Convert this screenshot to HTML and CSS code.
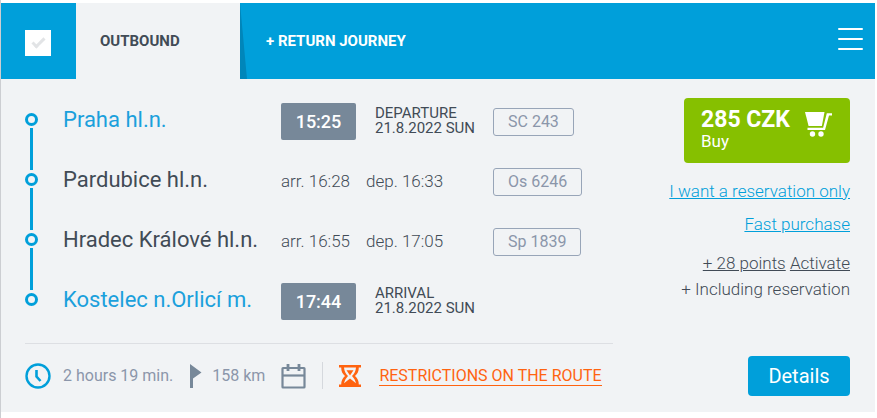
FILE: index.html
```
<!DOCTYPE html>
<html lang="en">
<head>
    <meta charset="UTF-8">
    <meta name="viewport" content="width=device-width, initial-scale=1.0">
    <title>Praha hl.n. - Kostelec n.Orlicí m.</title>
    <link rel="stylesheet" href="styles.css">
</head>
<body>
    <div class="connection">
        <header class="connection-header">
            <div class="select">
                <input type="checkbox" aria-label="Select connection">
            </div>
            <nav class="tabs">
                <a href="#" class="tab active">OUTBOUND</a>
                <a href="#" class="tab">+ RETURN JOURNEY</a>
            </nav>
            <button class="menu" aria-label="Menu">
                <span></span>
                <span></span>
                <span></span>
            </button>
        </header>

        <div class="connection-body">
            <main class="route">
                <ol class="stops">
                    <li class="stop">
                        <span class="marker"></span>
                        <span class="station end">Praha hl.n.</span>
                        <div class="times">
                            <span class="time-badge">15:25</span>
                            <div class="date">
                                <div>DEPARTURE</div>
                                <div>21.8.2022 SUN</div>
                            </div>
                        </div>
                        <span class="train">SC 243</span>
                    </li>
                    <li class="stop">
                        <span class="marker"></span>
                        <span class="station">Pardubice hl.n.</span>
                        <div class="times">
                            <span class="time">arr. 16:28</span>
                            <span class="time">dep. 16:33</span>
                        </div>
                        <span class="train">Os 6246</span>
                    </li>
                    <li class="stop">
                        <span class="marker"></span>
                        <span class="station">Hradec Králové hl.n.</span>
                        <div class="times">
                            <span class="time">arr. 16:55</span>
                            <span class="time">dep. 17:05</span>
                        </div>
                        <span class="train">Sp 1839</span>
                    </li>
                    <li class="stop">
                        <span class="marker"></span>
                        <span class="station end">Kostelec n.Orlicí m.</span>
                        <div class="times">
                            <span class="time-badge">17:44</span>
                            <div class="date">
                                <div>ARRIVAL</div>
                                <div>21.8.2022 SUN</div>
                            </div>
                        </div>
                    </li>
                </ol>

                <div class="summary">
                    <svg class="icon-clock" width="26" height="26" viewBox="0 0 26 26" fill="none" stroke="#009fda" stroke-width="2.4">
                        <circle cx="13" cy="13" r="11.5"/>
                        <path d="M11.5 7v6.5l4 4.5" stroke-width="2.6"/>
                    </svg>
                    <span class="duration">2 hours 19 min.</span>
                    <svg class="icon-flag" width="13" height="24" viewBox="0 0 13 24" fill="#778899">
                        <path d="M1 0l11.500 8.500L4 14.500V24H1z"/>
                    </svg>
                    <span class="distance">158 km</span>
                    <svg class="icon-calendar" width="25" height="26" viewBox="0 0 25 26" fill="none" stroke="#778899" stroke-width="2.2">
                        <rect x="1.500" y="5" width="22" height="19.500" rx="0.500"/>
                        <path d="M1 12.500h23"/>
                        <path d="M7 1v7M18 1v7" stroke-width="2.800"/>
                    </svg>
                    <span class="separator"></span>
                    <svg class="icon-hourglass" width="22" height="22" viewBox="0 0 22 22">
                        <path d="M0 0h22v2.400h-2.200c0 4-1.300 6.200-3.800 8.600 2.500 2.400 3.800 4.600 3.800 8.600H22V22H0v-2.400h2.200c0-4 1.300-6.200 3.800-8.600C3.500 8.600 2.200 6.400 2.200 2.400H0z" fill="#ff6310"/>
                        <path d="M5 2.400h12c-.3 3.600-1.600 6-4 8.600 2 2.200 3.300 4.400 4 7.200L11 13.500l-6 4.700c.7-2.800 2-5 4-7.200-2.400-2.600-3.700-5-4-8.600z" fill="#f1f3f5"/>
                        <path d="M7.500 5.200h7L11 10.500z" fill="#ff6310"/>
                    </svg>
                    <a href="#" class="restrictions">RESTRICTIONS ON THE ROUTE</a>
                </div>
            </main>

            <aside class="offer">
                <button class="buy">
                    <span class="buy-text">
                        <strong>285 CZK</strong>
                        Buy
                    </span>
                    <svg width="27" height="25" viewBox="0 0 27 25" fill="#fff">
                        <path d="M0 0h19.500l-2.600 14H3.600z"/>
                        <path d="M27 1.200v2.400h-3L20 18H2.500v-2.200h15.600L21.800 1.200z"/>
                        <circle cx="7.500" cy="22" r="2.700"/>
                        <circle cx="16" cy="22" r="2.700"/>
                    </svg>
                </button>
                <a href="#" class="link">I want a reservation only</a>
                <a href="#" class="link">Fast purchase</a>
                <p class="notes">
                    <a href="#">+ 28 points</a> <a href="#">Activate</a><br>
                    + Including reservation
                </p>
                <button class="details">Details</button>
            </aside>
        </div>
    </div>
</body>
</html>
```
FILE: styles.css
```
* {
    box-sizing: border-box;
}
body {
    font-family: Roboto, sans-serif;
    margin: 0;
    min-height: 100vh;
    background-color: #fff;
    color: #414b56;
    border-left: 1px solid #ccced2;
    padding: 3px 2px 5px 0;
}
button {
    font-family: inherit;
    border: none;
    cursor: pointer;
}
.connection {
    background-color: #f1f3f5;
}
.connection-header {
    background-color: #009fda;
    display: flex;
    height: 76px;
}
.select {
    width: 75px;
    display: flex;
    align-items: center;
    padding-left: 24px;
}
.select input {
    appearance: none;
    width: 26px;
    height: 26px;
    margin: 4px 0 0;
    background-color: #fff;
    display: flex;
    justify-content: center;
    cursor: pointer;
}
.select input::before {
    content: "";
    width: 10px;
    height: 4px;
    margin-top: 8px;
    border-left: 3px solid #e2e4e6;
    border-bottom: 3px solid #e2e4e6;
    transform: rotate(-45deg);
}
.tabs {
    display: flex;
    flex: 1;
}
.tab {
    color: #fff;
    font-size: 15px;
    font-weight: 700;
    line-height: 76px;
    padding: 0 26px;
    text-decoration: none;
}
.tab.active {
    position: relative;
    width: 164px;
    padding: 0 24px;
    background-color: #f1f3f5;
    color: #414b56;
}
/* slanted shadow of the open tab */
.tab.active::after {
    content: "";
    position: absolute;
    left: 100%;
    top: 0;
    width: 7px;
    height: 100%;
    background-color: #0086ba;
    clip-path: polygon(0 0, 100% 100%, 0 100%);
}
.menu {
    display: flex;
    flex-direction: column;
    justify-content: center;
    gap: 8px;
    background: none;
    padding: 0 12px 4px;
}
.menu span {
    width: 25px;
    height: 2px;
    background-color: #fff;
    border-radius: 1px;
}
.connection-body {
    display: flex;
    justify-content: space-between;
    padding: 0 25px 0 24px;
}
.route {
    flex: 1;
    max-width: 588px;
    padding: 12px 0 5px;
}
.stops {
    list-style: none;
    margin: 0;
    padding: 0;
}
.stop {
    position: relative;
    display: grid;
    grid-template-columns: 38px 218px 212px 1fr;
    align-items: center;
    height: 60px;
}
.marker {
    width: 13px;
    height: 13px;
    margin-bottom: 4px;
    border: 3px solid #009fda;
    border-radius: 50%;
}
/* line down to the next stop */
.stop:not(:last-child)::after {
    content: "";
    position: absolute;
    left: 5px;
    top: 37px;
    width: 3px;
    height: 42px;
    background-color: #009fda;
}
.station {
    padding-bottom: 3px;
    font-size: 22px;
}
.station.end {
    color: #1ba0dc;
}
.times {
    display: flex;
    align-items: center;
    gap: 16px;
}
.time {
    padding-bottom: 1px;
    font-size: 17px;
    font-weight: 300;
}
.time-badge {
    width: 75px;
    background-color: #778899;
    border-radius: 2px;
    color: #fff;
    font-size: 18px;
    font-weight: 500;
    line-height: 37px;
    text-align: center;
}
.date {
    margin-left: 3px;
    font-size: 15px;
    line-height: 15px;
}
.train {
    justify-self: start;
    border: 1px solid #98a5b8;
    border-radius: 3px;
    color: #8b96aa;
    font-size: 16px;
    line-height: 26px;
    margin-top: 2px;
    padding: 0 14px;
}
.summary {
    display: flex;
    align-items: center;
    height: 64px;
    margin-top: 12px;
    border-top: 1px solid #dddfe3;
    color: #8b96aa;
    font-size: 16px;
}
.duration {
    margin: 0 16px 0 12px;
}
.distance {
    margin: 0 16px 0 10px;
}
.separator {
    width: 1px;
    height: 27px;
    margin: 0 16px;
    background-color: #d5d8dd;
}
.restrictions {
    margin-left: 18px;
    border-bottom: 1px solid #ff6310;
    color: #ff6310;
    text-decoration: none;
}
.offer {
    display: flex;
    flex-direction: column;
    align-items: flex-end;
    padding: 19px 0 16px;
    font-size: 17px;
    font-weight: 300;
    text-align: right;
}
.buy {
    display: flex;
    justify-content: space-between;
    width: 166px;
    height: 65px;
    margin-bottom: 16px;
    padding: 11px 18px 0 17px;
    background-color: #86c000;
    border-radius: 4px;
    color: #fff;
    font-size: 17px;
    text-align: left;
}
.buy svg {
    margin-top: 3px;
}
.buy-text strong {
    display: block;
    font-size: 23px;
    line-height: 22px;
}
.link {
    color: #009fda;
    line-height: 25px;
    margin-bottom: 8px;
}
.notes {
    margin: 5px 0 0;
    line-height: 26px;
}
.notes a {
    color: inherit;
}
.details {
    width: 102px;
    margin-top: auto;
    background-color: #009fda;
    border-radius: 4px;
    color: #fff;
    font-size: 20px;
    line-height: 38px;
}
```
